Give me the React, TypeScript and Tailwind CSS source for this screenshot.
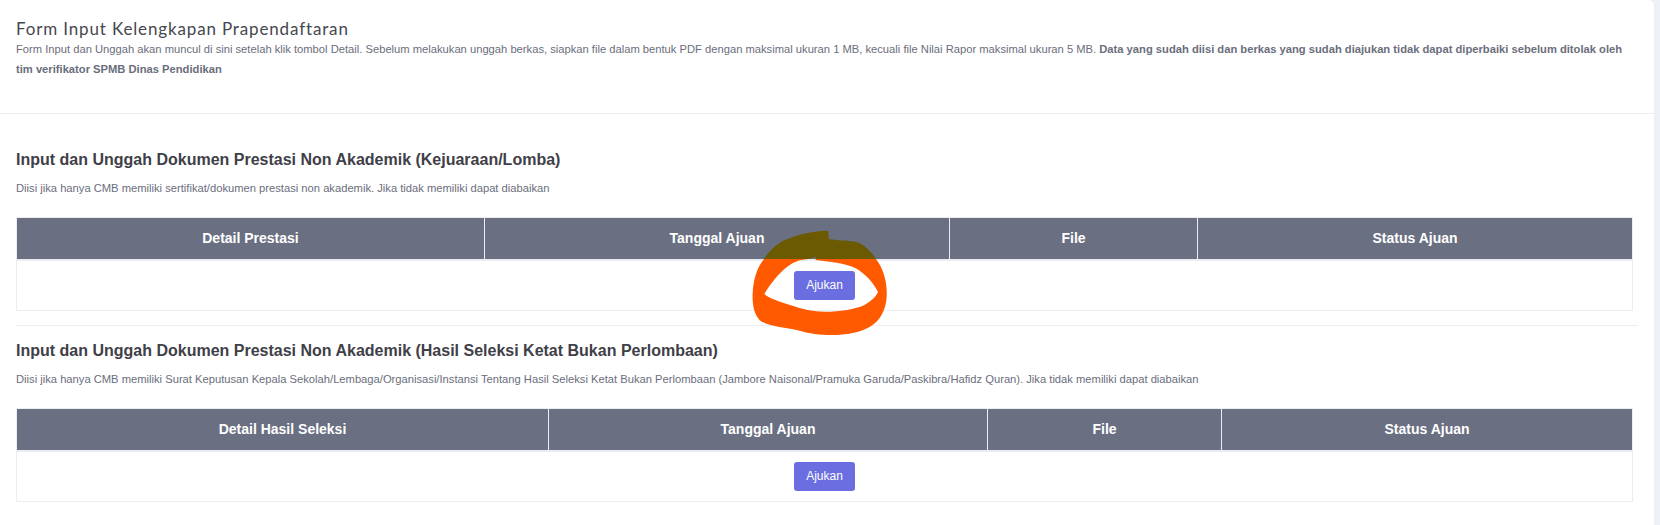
const sans = 'font-["Liberation_Sans",Arial,sans-serif]';

function Scribble() {
  // coretan spidol oranye di atas tombol Ajukan
  const shape =
    'M385 92 C350 92 300 100 250 122 C225 135 205 155 190 180 C170 205 160 240 158 280 C156 320 165 350 185 365 C215 380 250 382 290 390 C330 402 360 405 395 405 C440 405 480 397 510 380 C540 362 558 330 560 290 C562 250 552 210 530 180 C515 155 490 130 465 125 C435 120 410 122 386 116 Z M347 168 C340 178 320 176 295 182 C255 194 215 245 193 282 C205 295 240 305 270 315 C305 328 340 335 375 335 C420 335 465 328 495 314 C512 304 527 292 534 277 C522 250 497 222 467 205 C437 190 397 186 347 180 Z';
  return (
    <svg
      className="absolute left-[700px] top-[200px] w-[200px] h-[140px] pointer-events-none"
      viewBox="0 0 600 420"
    >
      <defs>
        <clipPath id="atas">
          <rect x="0" y="0" width="600" height="177" />
        </clipPath>
        <clipPath id="bawah">
          <rect x="0" y="177" width="600" height="243" />
        </clipPath>
      </defs>
      <path d={shape} fillRule="evenodd" fill="#6b5a00" clipPath="url(#atas)" />
      <path d={shape} fillRule="evenodd" fill="#ff5a00" clipPath="url(#bawah)" />
    </svg>
  );
}

function DokumenTable({ cols }: { cols: { label: string; width: string }[] }) {
  return (
    <table className="w-[1616px] table-fixed border-collapse border border-[#ebedf2]">
      <thead>
        <tr className="bg-[#6a6f82] h-[42px] border-b-2 border-[#ebedf2]">
          {cols.map((c) => (
            <th
              key={c.label}
              className={`${c.width} border-r border-[#ebedf2] last:border-r-0 text-white text-[14px] font-bold text-center`}
            >
              {c.label}
            </th>
          ))}
        </tr>
      </thead>
      <tbody>
        <tr>
          <td colSpan={4} className="h-[51px] text-center align-middle">
            <button className="w-[61px] h-[29px] rounded-[3px] bg-[#6a6ee0] text-white text-[12px]">
              Ajukan
            </button>
          </td>
        </tr>
      </tbody>
    </table>
  );
}

export default function App() {
  return (
    <div className={`${sans} relative h-[525px] w-[1660px] overflow-hidden bg-[#eef0f8]`}>
      <div className="h-[525px] w-[1654px] rounded-tr-[6px] bg-white">
        <div className="h-[114px] border-b border-[#ebedf2] px-4 pt-[19px]">
          <h3 className="font-['Lato',sans-serif] text-[17px] leading-[20px] tracking-[0.85px] font-normal text-[#46474f]">
            Form Input Kelengkapan Prapendaftaran
          </h3>
          <p className="w-[1620px] text-[11.2px] leading-[20px] text-[#6a6e7c]">
            Form Input dan Unggah akan muncul di sini setelah klik tombol Detail. Sebelum melakukan unggah berkas, siapkan file dalam bentuk PDF dengan maksimal ukuran 1 MB, kecuali file Nilai Rapor maksimal ukuran 5 MB.{' '}
            <b>Data yang sudah diisi dan berkas yang sudah diajukan tidak dapat diperbaiki sebelum ditolak oleh tim verifikator SPMB Dinas Pendidikan</b>
          </p>
        </div>

        <div className="px-4 pt-[36px]">
          <h4 className="text-[16px] leading-[20px] font-bold text-[#3f4048]">
            Input dan Unggah Dokumen Prestasi Non Akademik (Kejuaraan/Lomba)
          </h4>
          <p className="mt-[11px] mb-[22px] text-[11.2px] leading-[14px] text-[#6a6e7c]">
            Diisi jika hanya CMB memiliki sertifikat/dokumen prestasi non akademik. Jika tidak memiliki dapat diabaikan
          </p>
          <DokumenTable
            cols={[
              { label: 'Detail Prestasi', width: 'w-[468px]' },
              { label: 'Tanggal Ajuan', width: 'w-[465px]' },
              { label: 'File', width: 'w-[248px]' },
              { label: 'Status Ajuan', width: 'w-[435px]' },
            ]}
          />

          <div className="mt-[14px] border-t border-[#ebedf2] pt-[15px]">
            <h4 className="text-[16px] leading-[20px] font-bold text-[#3f4048]">
              Input dan Unggah Dokumen Prestasi Non Akademik (Hasil Seleksi Ketat Bukan Perlombaan)
            </h4>
            <p className="mt-[11px] mb-[22px] text-[11.2px] leading-[14px] text-[#6a6e7c]">
              Diisi jika hanya CMB memiliki Surat Keputusan Kepala Sekolah/Lembaga/Organisasi/Instansi Tentang Hasil Seleksi Ketat Bukan Perlombaan (Jambore Naisonal/Pramuka Garuda/Paskibra/Hafidz Quran). Jika tidak memiliki dapat diabaikan
            </p>
            <DokumenTable
              cols={[
                { label: 'Detail Hasil Seleksi', width: 'w-[532px]' },
                { label: 'Tanggal Ajuan', width: 'w-[439px]' },
                { label: 'File', width: 'w-[234px]' },
                { label: 'Status Ajuan', width: 'w-[411px]' },
              ]}
            />
          </div>
        </div>
      </div>
      <Scribble />
    </div>
  );
}
